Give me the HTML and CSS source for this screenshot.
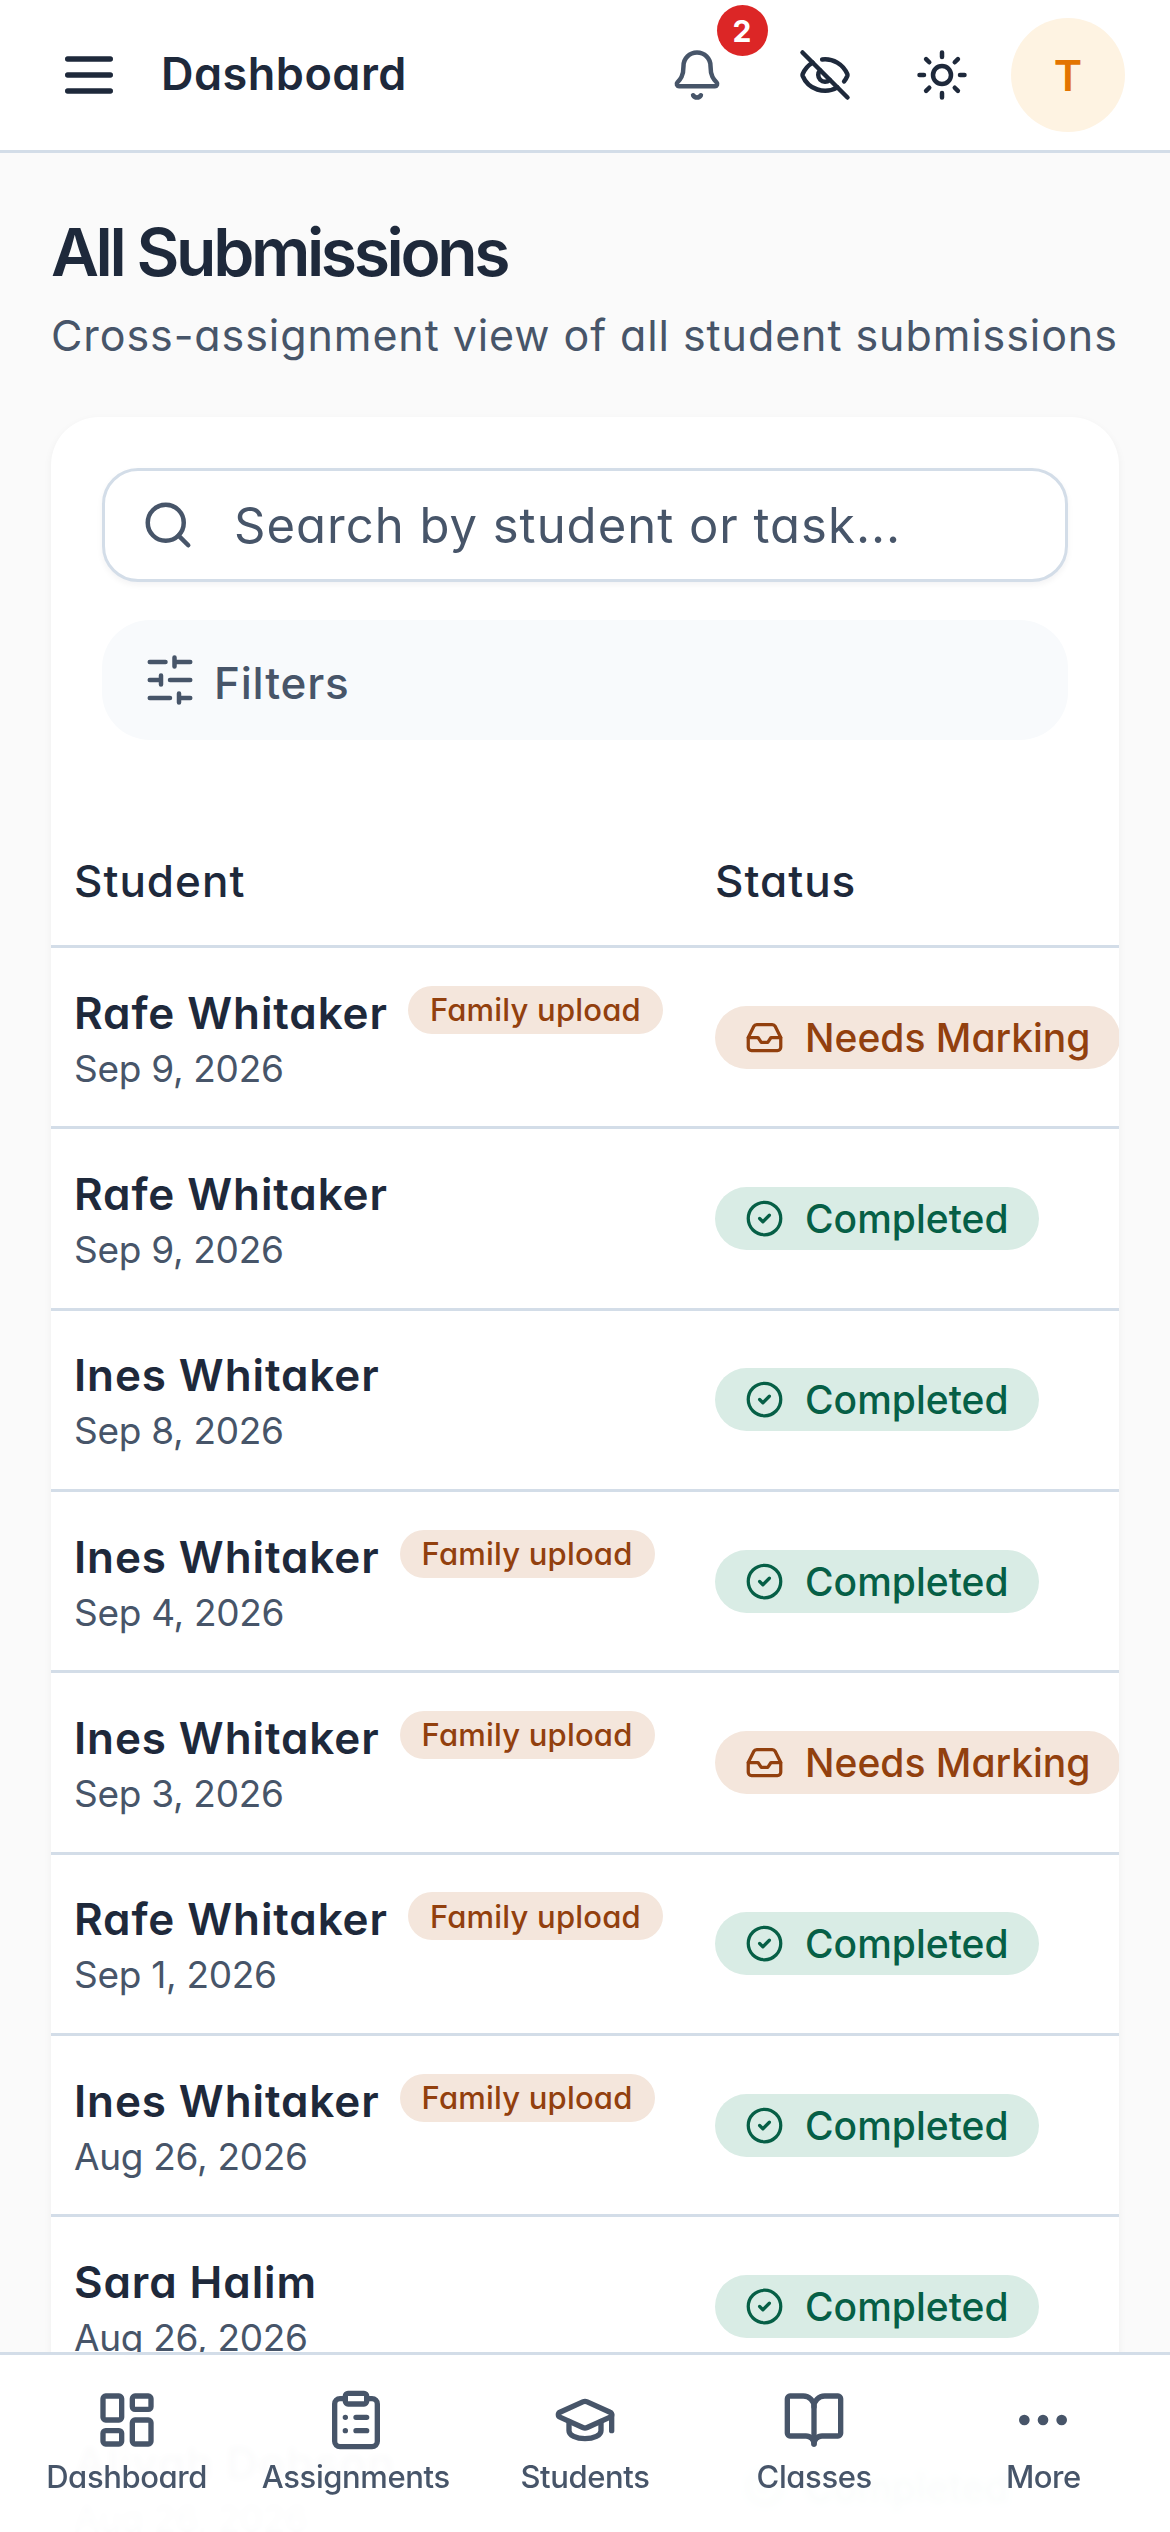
FILE: index.html
```html
<!DOCTYPE html>
<html lang="en">
<head>
<meta charset="utf-8">
<title>All Submissions</title>
<link rel="stylesheet" href="styles.css">
</head>
<body>
<svg class="sprite" width="0" height="0" aria-hidden="true">
  <symbol id="i-check" viewBox="0 0 24 24"><circle cx="12" cy="12" r="10"/><path d="m9 12 2 2 4-4"/></symbol>
  <symbol id="i-inbox" viewBox="0 0 24 24"><polyline points="22 12 16 12 14 15 10 15 8 12 2 12"/><path d="M5.45 5.11 2 12v6a2 2 0 0 0 2 2h16a2 2 0 0 0 2-2v-6l-3.45-6.89A2 2 0 0 0 16.76 4H7.24a2 2 0 0 0-1.79 1.11z"/></symbol>
</svg>
<div class="app">
  <header class="topbar">
    <button class="menu-btn" aria-label="Menu"><svg class="ico ico-menu" viewBox="0 0 24 24"><path d="M4 6h16M4 12h16M4 18h16"/></svg></button>
    <div class="topbar-title">Dashboard</div>
    <div class="topbar-actions">
      <button class="icon-btn bell-btn" aria-label="Notifications">
        <svg class="ico ico-hdr ico-slate" viewBox="0 0 24 24"><path d="M10.268 21a2 2 0 0 0 3.464 0"/><path d="M3.262 15.326A1 1 0 0 0 4 17h16a1 1 0 0 0 .74-1.673C19.41 13.956 18 12.499 18 8A6 6 0 0 0 6 8c0 4.499-1.411 5.956-2.738 7.326"/></svg>
        <span class="bell-count">2</span>
      </button>
      <button class="icon-btn eye-btn" aria-label="Hide"><svg class="ico ico-hdr" viewBox="0 0 24 24"><path d="M10.733 5.076a10.744 10.744 0 0 1 11.205 6.575 1 1 0 0 1 0 .696 10.747 10.747 0 0 1-1.444 2.49"/><path d="M14.084 14.158a3 3 0 0 1-4.242-4.242"/><path d="M17.479 17.499a10.75 10.75 0 0 1-15.417-5.151 1 1 0 0 1 0-.696 10.75 10.75 0 0 1 4.446-5.143"/><path d="m2 2 20 20"/></svg></button>
      <button class="icon-btn" aria-label="Theme"><svg class="ico ico-hdr" viewBox="0 0 24 24"><circle cx="12" cy="12" r="4"/><path d="M12 2v2M12 20v2M4.93 4.93l1.41 1.41M17.66 17.66l1.41 1.41M2 12h2M20 12h2M6.34 17.66l-1.41 1.41M19.07 4.93l-1.41 1.41"/></svg></button>
      <div class="avatar">T</div>
    </div>
  </header>

  <main class="page">
    <h1 class="page-title">All Submissions</h1>
    <p class="page-sub">Cross-assignment view of all student submissions</p>

    <section class="card">
      <div class="controls">
        <div class="search">
          <svg class="ico ico-search" viewBox="0 0 24 24"><circle cx="11" cy="11" r="8"/><path d="m21 21-4.3-4.3"/></svg>
          <span class="search-text">Search by student or task...</span>
        </div>
        <div class="filters">
          <svg class="ico ico-filter" viewBox="0 0 24 24"><path d="M21 4h-7M10 4H3M21 12h-9M8 12H3M21 20h-5M12 20H3M14 2v4M8 10v4M16 18v4"/></svg>
          <span>Filters</span>
        </div>
      </div>

      <div class="table">
        <div class="row row-head"><div class="cell">Student</div><div class="cell">Status</div></div>

        <div class="row"><div class="cell"><div class="name-line"><span class="name">Rafe Whitaker</span><span class="family">Family upload</span></div><div class="date">Sep 9, 2026</div></div><div class="cell"><span class="pill pill-needs"><svg class="ico ico-pill"><use href="#i-inbox"/></svg>Needs Marking</span></div></div>

        <div class="row"><div class="cell"><div class="name-line"><span class="name">Rafe Whitaker</span></div><div class="date">Sep 9, 2026</div></div><div class="cell"><span class="pill pill-done"><svg class="ico ico-pill"><use href="#i-check"/></svg>Completed</span></div></div>

        <div class="row"><div class="cell"><div class="name-line"><span class="name">Ines Whitaker</span></div><div class="date">Sep 8, 2026</div></div><div class="cell"><span class="pill pill-done"><svg class="ico ico-pill"><use href="#i-check"/></svg>Completed</span></div></div>

        <div class="row"><div class="cell"><div class="name-line"><span class="name">Ines Whitaker</span><span class="family">Family upload</span></div><div class="date">Sep 4, 2026</div></div><div class="cell"><span class="pill pill-done"><svg class="ico ico-pill"><use href="#i-check"/></svg>Completed</span></div></div>

        <div class="row"><div class="cell"><div class="name-line"><span class="name">Ines Whitaker</span><span class="family">Family upload</span></div><div class="date">Sep 3, 2026</div></div><div class="cell"><span class="pill pill-needs"><svg class="ico ico-pill"><use href="#i-inbox"/></svg>Needs Marking</span></div></div>

        <div class="row"><div class="cell"><div class="name-line"><span class="name">Rafe Whitaker</span><span class="family">Family upload</span></div><div class="date">Sep 1, 2026</div></div><div class="cell"><span class="pill pill-done"><svg class="ico ico-pill"><use href="#i-check"/></svg>Completed</span></div></div>

        <div class="row"><div class="cell"><div class="name-line"><span class="name">Ines Whitaker</span><span class="family">Family upload</span></div><div class="date">Aug 26, 2026</div></div><div class="cell"><span class="pill pill-done"><svg class="ico ico-pill"><use href="#i-check"/></svg>Completed</span></div></div>

        <div class="row"><div class="cell"><div class="name-line"><span class="name">Sara Halim</span></div><div class="date">Aug 26, 2026</div></div><div class="cell"><span class="pill pill-done"><svg class="ico ico-pill"><use href="#i-check"/></svg>Completed</span></div></div>

        <div class="row"><div class="cell"><div class="name-line"><span class="name">Aliyah Dobson</span></div><div class="date">Aug 26, 2026</div></div><div class="cell"><span class="pill pill-done"><svg class="ico ico-pill"><use href="#i-check"/></svg>Completed</span></div></div>
      </div>
    </section>
  </main>

  <nav class="bottom-nav">
    <a class="nav-item"><svg class="ico ico-nav" viewBox="0 0 24 24"><rect x="3" y="3" width="7" height="9" rx="1"/><rect x="14" y="3" width="7" height="5" rx="1"/><rect x="14" y="12" width="7" height="9" rx="1"/><rect x="3" y="16" width="7" height="5" rx="1"/></svg><span>Dashboard</span></a>
    <a class="nav-item"><svg class="ico ico-nav" viewBox="0 0 24 24"><rect x="8" y="2" width="8" height="4" rx="1"/><path d="M16 4h2a2 2 0 0 1 2 2v14a2 2 0 0 1-2 2H6a2 2 0 0 1-2-2V6a2 2 0 0 1 2-2h2"/><path d="M12 11h4M12 16h4M8 11h.01M8 16h.01"/></svg><span>Assignments</span></a>
    <a class="nav-item"><svg class="ico ico-nav" viewBox="0 0 24 24"><path d="M21.42 10.922a1 1 0 0 0-.019-1.838L12.83 5.18a2 2 0 0 0-1.66 0L2.6 9.08a1 1 0 0 0 0 1.832l8.57 3.908a2 2 0 0 0 1.66 0z"/><path d="M22 10v6"/><path d="M6 12.5V16a6 3 0 0 0 12 0v-3.5"/></svg><span>Students</span></a>
    <a class="nav-item"><svg class="ico ico-nav" viewBox="0 0 24 24"><path d="M12 7v14"/><path d="M3 18a1 1 0 0 1-1-1V4a1 1 0 0 1 1-1h5a4 4 0 0 1 4 4 4 4 0 0 1 4-4h5a1 1 0 0 1 1 1v13a1 1 0 0 1-1 1h-6a3 3 0 0 0-3 3 3 3 0 0 0-3-3z"/></svg><span>Classes</span></a>
    <a class="nav-item"><svg class="ico ico-nav" viewBox="0 0 24 24"><circle cx="12" cy="12" r="1"/><circle cx="19" cy="12" r="1"/><circle cx="5" cy="12" r="1"/></svg><span>More</span></a>
  </nav>
</div>
</body>
</html>
```

FILE: styles.css
```css
* { box-sizing: border-box; }
html, body { margin: 0; padding: 0; }
body {
  font-family: Inter, Lato, "Liberation Sans", sans-serif;
  font-feature-settings: "cv11" 1;
  color: #1e293b;
  background: #fafafa;
}
button { font: inherit; color: inherit; background: none; border: 0; padding: 0; }
.sprite { position: absolute; }
.app { height: 2532px; overflow: hidden; position: relative; }

.ico { fill: none; stroke: currentColor; stroke-width: 2; stroke-linecap: round; stroke-linejoin: round; display: block; flex: none; }

/* top bar */
.topbar {
  height: 153px;
  background: #fff;
  border-bottom: 3px solid #d3dde8;
  display: flex;
  align-items: center;
  padding: 0 45px 0 57px;
}
.menu-btn { width: 64px; height: 64px; }
.ico-menu { width: 64px; height: 64px; color: #1e293b; }
.topbar-title { margin-left: 40px; font-size: 45px; line-height: 60px; font-weight: 600; letter-spacing: .5px; position: relative; top: -1px; }
.topbar-actions { margin-left: auto; display: flex; align-items: center; }
.icon-btn { width: 117px; height: 54px; display: flex; align-items: center; justify-content: center; position: relative; }
.bell-btn { margin-right: 10.5px; }
.ico-hdr { width: 54px; height: 54px; color: #1e293b; }
.ico-slate { color: #475569; }
.bell-count {
  position: absolute;
  left: 78px;
  top: -43px;
  width: 51px;
  height: 51px;
  border-radius: 50%;
  background: #dc2626;
  color: #fff;
  font-size: 30px;
  font-weight: 700;
  display: flex;
  align-items: center;
  justify-content: center;
}
.avatar {
  margin-left: 11px;
  width: 114px;
  height: 114px;
  border-radius: 50%;
  background: #fef3e2;
  color: #e37400;
  font-size: 43px;
  font-weight: 600;
  display: flex;
  align-items: center;
  justify-content: center;
}

/* page */
.page { padding: 60px 51px 0; }
.page-title { margin: 0; font-size: 66px; line-height: 78px; font-weight: 600; letter-spacing: -3.4px; }
.page-sub { margin: 14px 0 0; font-size: 43px; line-height: 60px; font-weight: 400; letter-spacing: .92px; color: #475569; white-space: nowrap; }

.card {
  margin-top: 52px;
  background: #fff;
  border-radius: 48px 48px 0 0;
  box-shadow: 0 3px 9px rgba(15, 23, 42, .05);
  overflow: hidden;
}
.controls { padding: 51px 51px 0; }
.search {
  height: 114px;
  border: 3px solid #d3dde8;
  border-radius: 36px;
  background: #fff;
  box-shadow: 0 3px 6px rgba(15, 23, 42, .05);
  display: flex;
  align-items: center;
  padding-left: 36px;
  color: #475569;
}
.ico-search { width: 54px; height: 54px; }
.search-text { margin-left: 39px; font-size: 49px; line-height: 60px; letter-spacing: 1px; position: relative; top: 1px; }
.filters {
  margin-top: 38px;
  height: 120px;
  border-radius: 48px;
  background: #f8fafc;
  display: flex;
  align-items: center;
  padding-left: 41px;
  color: #475569;
  font-size: 44px;
  font-weight: 500;
  letter-spacing: .8px;
}
.filters span { position: relative; top: 3px; }
.ico-filter { width: 54px; height: 54px; margin-right: 17px; }

/* table */
.table { margin-top: 75px; }
.row {
  height: 181.33px;
  display: grid;
  grid-template-columns: 640px 1fr;
  border-bottom: 3px solid #d3dde8;
}
.row-head { height: 133px; font-size: 44px; font-weight: 500; letter-spacing: 1px; }
.row-head .cell { padding-top: 2px; }
.cell { padding-left: 23px; display: flex; flex-direction: column; justify-content: center; align-items: flex-start; min-width: 0; }
.row .cell:last-child { padding-left: 24px; }
.row:not(.row-head) .cell:first-child { padding-top: 7px; }
.name-line { display: flex; align-items: center; gap: 20px; height: 54px; }
.name { font-size: 44px; font-weight: 600; letter-spacing: .9px; white-space: nowrap; }
.date { margin-top: 2px; font-size: 37px; line-height: 54px; letter-spacing: -.3px; color: #475569; }
.family {
  height: 48px;
  padding: 0 22px;
  border-radius: 24px;
  background: #f4e6dc;
  color: #92400e;
  font-size: 31px;
  font-weight: 500;
  letter-spacing: .2px;
  display: flex;
  align-items: center;
  white-space: nowrap;
  position: relative;
  top: -3px;
}
.pill {
  height: 63px;
  border-radius: 32px;
  padding: 0 30px;
  font-size: 39px;
  font-weight: 500;
  display: inline-flex;
  align-items: center;
  white-space: nowrap;
}
.ico-pill { width: 39px; height: 39px; margin-right: 21px; }
.pill-needs { background: #f4e6dc; color: #92400e; }
.pill-done { background: #d9ece5; color: #065f46; }

/* bottom nav */
.bottom-nav {
  position: absolute;
  left: 0;
  right: 0;
  bottom: 0;
  height: 180px;
  border-top: 3px solid #d3dde8;
  background: rgba(255, 255, 255, .98);
  backdrop-filter: blur(3px);
  display: grid;
  grid-template-columns: repeat(5, 1fr);
  padding: 33px 12px 0;
}
.nav-item { display: flex; flex-direction: column; align-items: center; color: #475569; font-size: 31px; font-weight: 500; letter-spacing: -.4px; }
.ico-nav { width: 64px; height: 64px; }
.nav-item span { margin-top: 5px; line-height: 40px; white-space: nowrap; }
```
